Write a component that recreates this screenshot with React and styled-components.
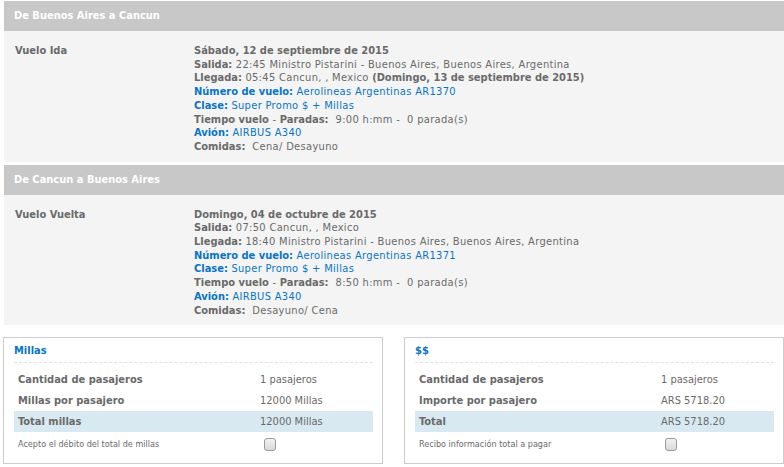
import React from 'react';
import styled, { createGlobalStyle } from 'styled-components';

const colors = {
  text: '#6a6a6a',
  blue: '#0a74c4',
  header: '#c8c8c8',
  body: '#f4f4f4',
  border: '#cccccc',
  highlight: '#d8e9f1',
};

const font = `"DejaVu Sans Condensed", "DejaVu Sans", Verdana, sans-serif`;

const GlobalStyle = createGlobalStyle`
  body {
    margin: 0;
    background: #fff;
    font-family: ${font};
    color: ${colors.text};
  }
`;

const Page = styled.div`
  width: 784px;
  padding-top: 1px;
  display: flex;
  flex-direction: column;
`;

const Leg = styled.section`
  margin: 0 0 3px 4px;
`;

const LegHeader = styled.div`
  height: 30px;
  line-height: 30px;
  padding-left: 10px;
  background: ${colors.header};
  color: #fff;
  font-weight: bold;
  font-size: 11px;
`;

const LegBody = styled.div`
  display: grid;
  grid-template-columns: 179px 1fr;
  padding: 13px 11px 8px;
  background: ${colors.body};
  font-size: 11px;
  line-height: 13.7px;
`;

const LegName = styled.div`
  font-weight: bold;
`;

const Lines = styled.div`
  display: flex;
  flex-direction: column;
`;

const DateLine = styled.div`
  font-weight: bold;
`;

const Line = styled.div`
  color: ${p => (p.$blue ? colors.blue : colors.text)};
  white-space: pre;
  letter-spacing: 0.33px;
  b {
    font-weight: bold;
    letter-spacing: 0;
  }
`;

const Totals = styled.div`
  display: grid;
  grid-template-columns: 380px 380px;
  column-gap: 21px;
  margin: 9px 0 0 3px;
`;

const Box = styled.div`
  border: 1px solid ${colors.border};
  padding: 6px 9px 8px 10px;
  height: 111px;
`;

const BoxTitle = styled.div`
  color: ${colors.blue};
  font-weight: bold;
  font-size: 11px;
  padding-bottom: 5px;
  border-bottom: 1px dashed #e2e2e2;
  margin-bottom: 6px;
`;

const Row = styled.div`
  display: grid;
  grid-template-columns: 242px 1fr;
  align-items: center;
  height: 21px;
  padding-left: 4px;
  background: ${p => (p.$total ? colors.highlight : 'transparent')};
  font-size: 11px;
`;

const RowLabel = styled.div`
  font-weight: bold;
`;

const CheckRow = styled(Row)`
  font-size: 9px;
  height: 24px;
`;

const Check = styled.input.attrs({ type: 'checkbox' })`
  appearance: none;
  margin: 0 0 0 4px;
  width: 12px;
  height: 13px;
  border: 1px solid #9a9a9a;
  border-radius: 3px;
  background: linear-gradient(#f2f2f2, #d9d9d9);
`;

const legs = [
  {
    title: 'De Buenos Aires a Cancun',
    name: 'Vuelo Ida',
    date: 'Sábado, 12 de septiembre de 2015',
    salida: '22:45 Ministro Pistarini - Buenos Aires, Buenos Aires, Argentina',
    llegada: '05:45 Cancun, , Mexico',
    llegadaExtra: '(Domingo, 13 de septiembre de 2015)',
    vuelo: 'Aerolineas Argentinas AR1370',
    tiempo: '9:00 h:mm -  0 parada(s)',
    comidas: 'Cena/ Desayuno',
  },
  {
    title: 'De Cancun a Buenos Aires',
    name: 'Vuelo Vuelta',
    date: 'Domingo, 04 de octubre de 2015',
    salida: '07:50 Cancun, , Mexico',
    llegada: '18:40 Ministro Pistarini - Buenos Aires, Buenos Aires, Argentina',
    vuelo: 'Aerolineas Argentinas AR1371',
    tiempo: '8:50 h:mm -  0 parada(s)',
    comidas: 'Desayuno/ Cena',
  },
];

const boxes = [
  {
    title: 'Millas',
    rows: [
      ['Cantidad de pasajeros', '1 pasajeros'],
      ['Millas por pasajero', '12000 Millas'],
      ['Total millas', '12000 Millas'],
    ],
    check: 'Acepto el débito del total de millas',
  },
  {
    title: '$$',
    rows: [
      ['Cantidad de pasajeros', '1 pasajeros'],
      ['Importe por pasajero', 'ARS 5718.20'],
      ['Total', 'ARS 5718.20'],
    ],
    check: 'Recibo información total a pagar',
  },
];

export default function App() {
  return (
    <>
      <GlobalStyle />
      <Page>
        {legs.map(leg => (
          <Leg key={leg.name}>
            <LegHeader>{leg.title}</LegHeader>
            <LegBody>
              <LegName>{leg.name}</LegName>
              <Lines>
                <DateLine>{leg.date}</DateLine>
                <Line><b>Salida:</b> {leg.salida}</Line>
                <Line>
                  <b>Llegada:</b> {leg.llegada}
                  {leg.llegadaExtra && <> <b>{leg.llegadaExtra}</b></>}
                </Line>
                <Line $blue><b>Número de vuelo:</b> {leg.vuelo}</Line>
                <Line $blue><b>Clase:</b> Super Promo $ + Millas</Line>
                <Line><b>Tiempo vuelo</b> - <b>Paradas:</b>  {leg.tiempo}</Line>
                <Line $blue><b>Avión:</b> AIRBUS A340</Line>
                <Line><b>Comidas:</b>  {leg.comidas}</Line>
              </Lines>
            </LegBody>
          </Leg>
        ))}
        <Totals>
          {boxes.map(box => (
            <Box key={box.title}>
              <BoxTitle>{box.title}</BoxTitle>
              {box.rows.map(([label, value], i) => (
                <Row key={label} $total={i === 2}>
                  <RowLabel>{label}</RowLabel>
                  <div>{value}</div>
                </Row>
              ))}
              <CheckRow>
                <div>{box.check}</div>
                <Check />
              </CheckRow>
            </Box>
          ))}
        </Totals>
      </Page>
    </>
  );
}
